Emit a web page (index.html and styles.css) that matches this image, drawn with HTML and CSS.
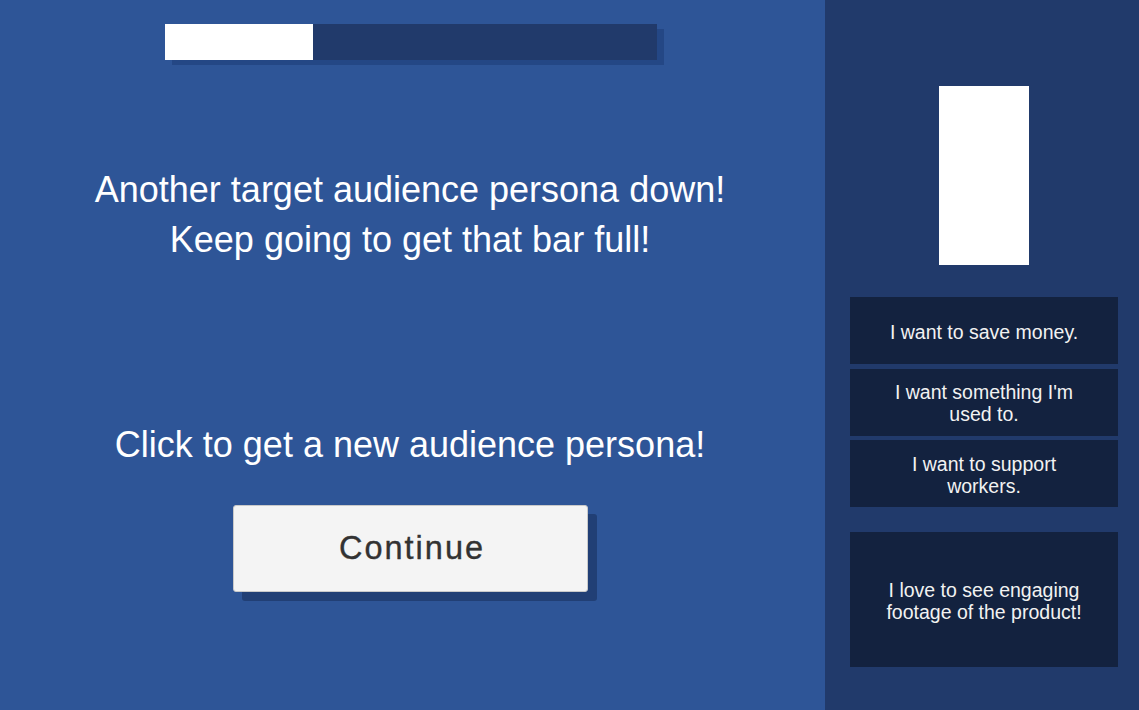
FILE: index.html
```html
<!DOCTYPE html>
<html>
<head>
<meta charset="utf-8">
<link rel="stylesheet" href="styles.css">
</head>
<body>
<div class="app">
  <main class="stage">
    <div class="progress">
      <div class="progress-fill" style="width: 148px"></div>
    </div>
    <h1 class="headline">Another target audience persona down!<br>Keep going to get that bar full!</h1>
    <p class="prompt">Click to get a new audience persona!</p>
    <button class="continue">Continue</button>
  </main>
  <aside class="sidebar">
    <div class="vbar"></div>
    <div class="cards">
      <div class="card">I want to save money.</div>
      <div class="card">I want something I'm<br>used to.</div>
      <div class="card">I want to support<br>workers.</div>
    </div>
    <div class="card card-big">I love to see engaging<br>footage of the product!</div>
  </aside>
</div>
</body>
</html>
```
FILE: styles.css
```css
html, body {
  margin: 0;
  padding: 0;
}
body {
  font-family: "Liberation Sans", Arial, sans-serif;
  width: 1139px;
  height: 710px;
  overflow: hidden;
}
.app {
  display: flex;
  height: 710px;
}
.stage {
  width: 825px;
  background: #2e5597;
  display: flex;
  flex-direction: column;
  align-items: center;
  padding-top: 24px;
  box-sizing: border-box;
}
.progress {
  width: 492px;
  height: 36px;
  margin-left: -3px;
  background: #213a6b;
  box-shadow: 7px 5px 0 #244785;
  display: flex;
}
.progress-fill {
  background: #ffffff;
  height: 100%;
}
.headline {
  margin: 105px 0 0 0;
  margin-left: -5px;
  font-weight: normal;
  font-size: 36px;
  line-height: 50px;
  color: #ffffff;
  text-align: center;
}
.prompt {
  margin: 155px 0 0 0;
  margin-left: -5px;
  font-size: 36px;
  line-height: 50px;
  color: #ffffff;
}
.continue {
  margin-top: 35px;
  margin-left: -5px;
  width: 355px;
  height: 87px;
  background: #f4f4f4;
  border: 1px solid #c9c9c9;
  border-radius: 3px;
  box-shadow: 9px 9px 0 #213f75;
  font-family: "Liberation Sans", Arial, sans-serif;
  font-size: 32.5px;
  letter-spacing: 2px;
  color: #323232;
  -webkit-text-stroke: 0.35px #323232;
  padding: 0 0 0 4px;
}
.sidebar {
  width: 314px;
  background: #213a6b;
  display: flex;
  flex-direction: column;
  align-items: center;
  padding-top: 86px;
  padding-left: 4px;
  box-sizing: border-box;
}
.vbar {
  width: 90px;
  height: 179px;
  background: #ffffff;
}
.cards {
  margin-top: 32px;
  display: flex;
  flex-direction: column;
  gap: 4.5px;
}
.card {
  width: 268px;
  height: 67px;
  background: #13223f;
  color: #f2f2f2;
  font-size: 19.5px;
  line-height: 22px;
  padding-top: 2px;
  display: flex;
  align-items: center;
  justify-content: center;
  text-align: center;
  box-sizing: border-box;
}
.card-big {
  margin-top: 25px;
  height: 135px;
}
```
